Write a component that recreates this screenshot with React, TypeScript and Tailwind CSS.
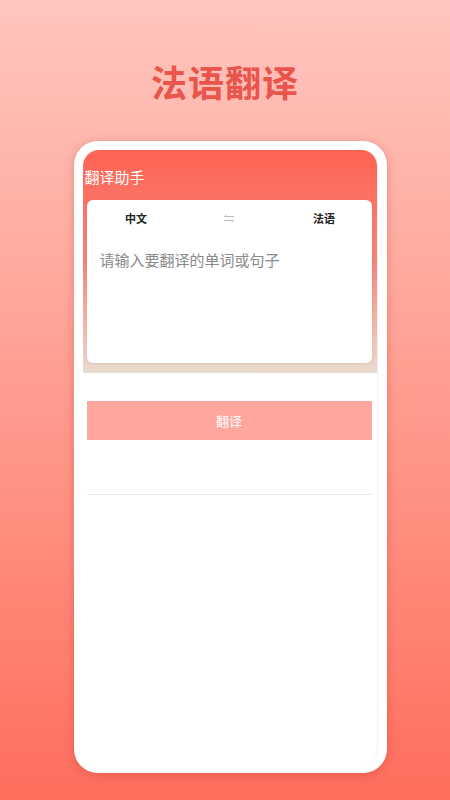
import React from 'react'

function SwapIcon() {
  return (
    <svg width="12" height="9" viewBox="0 0 12 9" fill="none" stroke="#bdbdbd" strokeWidth="1">
      <path d="M11 2.5H1.5M1.5 2.5L3.5 0.8" />
      <path d="M1 6.5H10.5M10.5 6.5L8.5 8.2" />
    </svg>
  )
}

export default function App() {
  return (
    <div
      className="w-full h-[800px] flex flex-col items-center bg-gradient-to-b from-[#ffc6bf] to-[#ff6d5c]"
      style={{ fontFamily: '"Noto Sans CJK SC", "Noto Sans", sans-serif' }}
    >
      <h1 className="mt-[58px] text-[36px] leading-[46px] font-bold text-[#e9544b] tracking-[1px]">
        法语翻译
      </h1>

      {/* phone frame */}
      <div className="mt-[37px] ml-[10px] w-[313px] h-[632px] bg-white rounded-[24px] p-[9px] shadow-[0_2px_10px_rgba(180,60,50,0.35)]">
        <div className="w-full h-full rounded-[16px] overflow-hidden bg-white flex flex-col border-r border-[#f1f1f1]">
          {/* header */}
          <div className="h-[223px] bg-gradient-to-b from-[#ff6352] via-[#f4847a] to-[#e8dbcf] flex flex-col pl-[4px] pr-[5px]">
            <div className="h-[50px] flex items-center pt-[4px] -ml-[2px] text-[15px] text-white">翻译助手</div>
            <div className="h-[163px] bg-white rounded-[6px] shadow-[0_1px_3px_rgba(0,0,0,0.08)] flex flex-col">
              <div className="grid grid-cols-3 h-[36px] items-center text-[11px] font-bold text-[#222]">
                <div className="text-center pl-[4px]">中文</div>
                <div className="flex justify-center">
                  <SwapIcon />
                </div>
                <div className="text-center">法语</div>
              </div>
              <div className="px-[13px] pt-[13px] text-[15px] leading-[22px] text-[#8a8a8a]">
                请输入要翻译的单词或句子
              </div>
            </div>
          </div>

          {/* body */}
          <div className="pl-[4px] pr-[5px] pt-[28px]">
            <button className="w-full h-[39px] bg-[#ffa69d] text-white text-[13px] flex items-center justify-center">
              翻译
            </button>
            <div className="mt-[54px] h-px bg-[#e6e6e6]" />
          </div>
        </div>
      </div>
    </div>
  )
}
